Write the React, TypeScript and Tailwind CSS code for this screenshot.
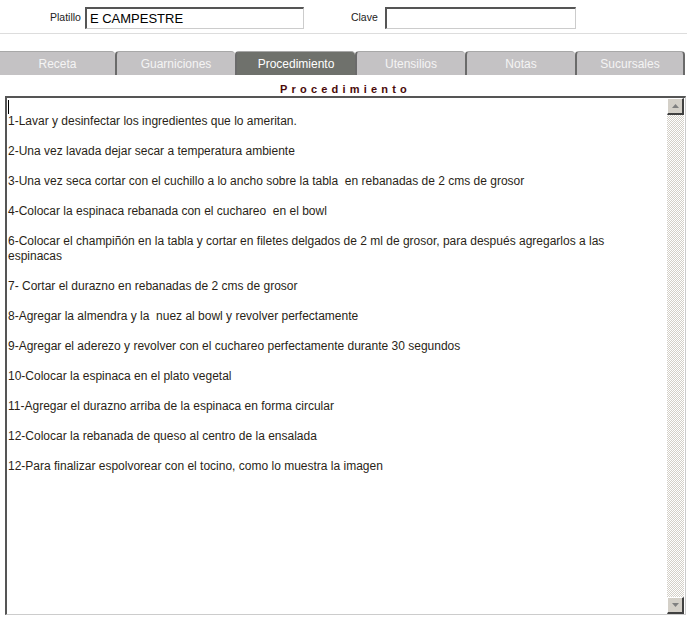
const steps = [
  "1-Lavar y desinfectar los ingredientes que lo ameritan.",
  "2-Una vez lavada dejar secar a temperatura ambiente",
  "3-Una vez seca cortar con el cuchillo a lo ancho sobre la tabla  en rebanadas de 2 cms de grosor",
  "4-Colocar la espinaca rebanada con el cuchareo  en el bowl",
  "6-Colocar el champiñón en la tabla y cortar en filetes delgados de 2 ml de grosor, para después agregarlos a las espinacas",
  "7- Cortar el durazno en rebanadas de 2 cms de grosor",
  "8-Agregar la almendra y la  nuez al bowl y revolver perfectamente",
  "9-Agregar el aderezo y revolver con el cuchareo perfectamente durante 30 segundos",
  "10-Colocar la espinaca en el plato vegetal",
  "11-Agregar el durazno arriba de la espinaca en forma circular",
  "12-Colocar la rebanada de queso al centro de la ensalada",
  "12-Para finalizar espolvorear con el tocino, como lo muestra la imagen",
];

const tabs = [
  { label: "Receta", w: "w-[115px]" },
  { label: "Guarniciones", w: "w-[120px]" },
  { label: "Procedimiento", w: "w-[120px]" },
  { label: "Utensilios", w: "w-[110px]" },
  { label: "Notas", w: "w-[110px]" },
  { label: "Sucursales", w: "w-[110px]" },
];

function Field({
  label,
  value,
  width,
  gap,
}: {
  label: string;
  value: string;
  width: string;
  gap: string;
}) {
  return (
    <div className={`flex items-center ${gap}`}>
      <span className="text-[10.5px] text-[#222]">{label}</span>
      <div
        className={`${width} h-[22px] bg-white border-t-2 border-l-2 border-b border-r border-t-[#555] border-l-[#555] border-b-[#ccc] border-r-[#ccc] px-[3px] text-[13px] leading-[19px] text-black`}
      >
        {value}
      </div>
    </div>
  );
}

function ScrollButton({ up }: { up: boolean }) {
  return (
    <div className="w-[17px] h-[17px] bg-[#d4d0c8] border-t border-l border-t-white border-l-white border-b-2 border-r-2 border-b-[#404040] border-r-[#404040] flex items-center justify-center">
      <svg width="7" height="4" viewBox="0 0 7 4">
        {up ? (
          <polygon points="3.5,0 7,4 0,4" fill="#808080" />
        ) : (
          <polygon points="0,0 7,0 3.5,4" fill="#808080" />
        )}
      </svg>
    </div>
  );
}

export default function App() {
  return (
    <div
      className="w-[687px] h-[618px] bg-white overflow-hidden"
      style={{ fontFamily: '"Liberation Sans", Arial, sans-serif' }}
    >
      <div className="h-[34px] border-b border-[#ddd] flex items-start pt-[7px]">
        <div className="ml-[50px]">
          <Field label="Platillo" value="E CAMPESTRE" width="w-[219px]" gap="gap-[4px]" />
        </div>
        <div className="ml-[47px]">
          <Field label="Clave" value="" width="w-[191px]" gap="gap-[7px]" />
        </div>
      </div>

      <div className="mt-[17px] flex h-[24px]">
        {tabs.map((t, i) => {
          const active = t.label === "Procedimiento";
          return (
            <div
              key={t.label}
              className={`${t.w} h-full flex items-center justify-center text-[12px] rounded-tr-[4px] border-t border-t-[#a8a8a8] ${
                i > 0 ? "border-l-2 border-l-[#6a6a6a] rounded-tl-[4px]" : ""
              } ${
                active ? "bg-[#6f716c] text-white" : "bg-[#c4c2c4] text-[#f4f4f4]"
              } ${i === tabs.length - 1 ? "border-r-2 border-r-[#6a6a6a]" : ""}`}
            >
              {t.label}
            </div>
          );
        })}
      </div>

      <div className="h-[21px] flex items-end justify-center pl-[4px]">
        <span className="text-[11px] font-bold tracking-[4.2px] text-[#4a0a0a] leading-[13px]">
          Procedimiento
        </span>
      </div>

      <div className="ml-[5px] w-[681px] h-[519px] flex border-t-2 border-l-2 border-t-[#555] border-l-[#555] border-b border-r border-b-[#ccc] border-r-[#ccc]">
        <div className="flex-1 pl-[1px] pt-[1px] text-[12px] leading-[15px] text-[#2a1f17] whitespace-pre-wrap">
          <div className="h-[15px] flex items-center">
            <span className="w-px h-[14px] bg-black" />
          </div>
          {steps.map((s) => (
            <div key={s}>
              <div className="pr-[20px]">{s}</div>
              <div className="h-[15px]" />
            </div>
          ))}
        </div>
        <div className="w-[17px] flex flex-col mr-[1px]">
          <ScrollButton up />
          <div className="flex-1 bg-[repeating-conic-gradient(#d4d0c8_0_25%,#ffffff_0_50%)] bg-[length:2px_2px]" />
          <ScrollButton up={false} />
        </div>
      </div>
    </div>
  );
}
